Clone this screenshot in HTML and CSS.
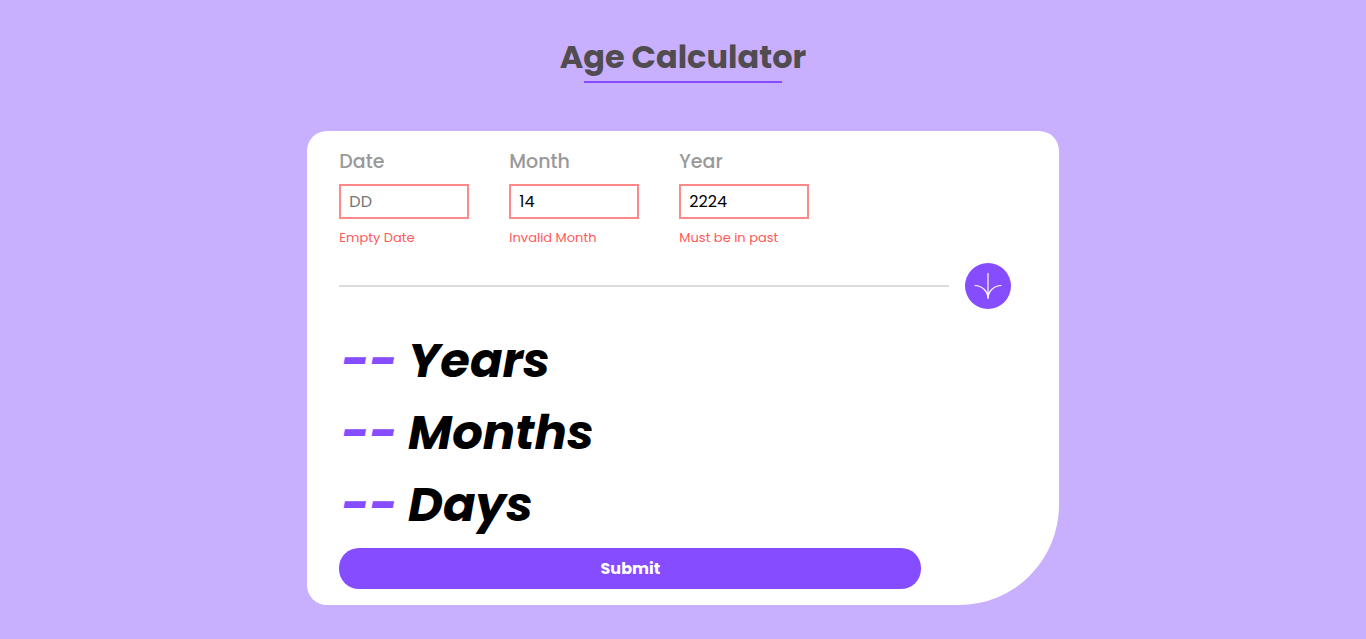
FILE: index.html
```html
<!DOCTYPE html>
<html lang="en">
<head>
<meta charset="utf-8">
<meta name="viewport" content="width=device-width, initial-scale=1">
<title>Age Calculator</title>
<link rel="stylesheet" href="styles.css">
</head>
<body>
<header class="header">
  <h1 class="title">Age Calculator</h1>
</header>
<main>
<form class="card" novalidate>
  <div class="fields">
    <div class="field">
      <label class="label" for="date">Date</label>
      <input class="input" id="date" type="text" inputmode="numeric" placeholder="DD" aria-describedby="date-error">
      <p class="error" id="date-error">Empty Date</p>
    </div>
    <div class="field">
      <label class="label" for="month">Month</label>
      <input class="input" id="month" type="text" inputmode="numeric" placeholder="MM" value="14" aria-describedby="month-error">
      <p class="error" id="month-error">Invalid Month</p>
    </div>
    <div class="field">
      <label class="label" for="year">Year</label>
      <input class="input" id="year" type="text" inputmode="numeric" placeholder="YYYY" value="2224" aria-describedby="year-error">
      <p class="error" id="year-error">Must be in past</p>
    </div>
  </div>
  <div class="divider">
    <hr class="rule">
    <svg class="arrow" viewBox="0 0 46 46" aria-hidden="true">
      <circle class="disc" cx="23" cy="23" r="23"/>
      <path class="stroke" d="M23 10v26M9.500 22.500C17 22.500 23 28 23 36C23 28 29 22.500 36.500 22.500"/>
    </svg>
  </div>
  <div class="results">
    <p class="result"><span class="value">--</span> Years</p>
    <p class="result"><span class="value">--</span> Months</p>
    <p class="result"><span class="value">--</span> Days</p>
  </div>
  <button class="submit" type="submit">Submit</button>
</form>
</main>
</body>
</html>
```
FILE: styles.css
```css
* {
  box-sizing: border-box;
  margin: 0;
  padding: 0;
}

body {
  min-height: 100vh;
  background: #c8b0ff;
  font-family: Poppins, Inter, "Open Sans", sans-serif;
}

.header {
  display: flex;
  justify-content: center;
  padding: 33px 0 48px;
}

.title {
  display: flex;
  flex-direction: column;
  align-items: center;
  color: #504c50;
  font-size: 32px;
  line-height: 48px;
}

.title::after {
  content: "";
  width: 80%;
  height: 2px;
  background: #854dff;
}

.card {
  width: 55%;
  margin: 0 auto;
  padding: 16px 32px;
  background: #fff;
  border-radius: 20px 20px 100px 20px;
}

.fields {
  display: flex;
  gap: 40px;
}

.field {
  width: 130px;
}

.label {
  display: block;
  margin-bottom: 8px;
  color: #999;
  font-size: 19px;
  font-weight: 500;
  line-height: 29px;
}

.input {
  display: block;
  width: 100%;
  height: 35px;
  padding: 0 8px;
  border: 2px solid #ff8888;
  background: #fff;
  color: #000;
  font-family: inherit;
  font-size: 16px;
}

.input::placeholder {
  color: #757575;
}

.error {
  margin-top: 8px;
  color: #ff5959;
  font-size: 13px;
  line-height: 22px;
}

.divider {
  display: flex;
  align-items: center;
  gap: 16px;
  margin: 14px 16px 16px 0;
}

.rule {
  flex: 1;
  height: 2px;
  border: 0;
  background: #dcdcdc;
}

.arrow {
  width: 46px;
  height: 46px;
}

.disc {
  fill: #854dff;
}

.stroke {
  fill: none;
  stroke: #fff;
  stroke-width: 1.200;
}

.results {
  padding-left: 2px;
}

.result {
  font-size: 48px;
  font-style: italic;
  font-weight: 700;
  line-height: 72px;
}

.value {
  color: #854dff;
}

.submit {
  display: block;
  width: 85%;
  max-width: 582px;
  height: 41px;
  margin-top: 7px;
  border: 0;
  border-radius: 20px;
  background: #854dff;
  color: #fff;
  font-family: inherit;
  font-size: 16px;
  font-weight: 700;
  cursor: pointer;
}
```
